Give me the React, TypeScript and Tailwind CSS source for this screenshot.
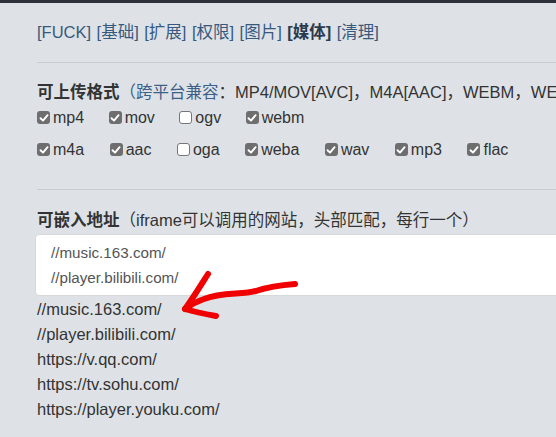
import React from "react";

const FONT = '"Liberation Sans", Arial, "Noto Sans CJK SC", sans-serif';

function Box({ checked }: { checked: boolean }) {
  return checked ? (
    <span className="inline-flex h-[13px] w-[13px] shrink-0 items-center justify-center rounded-[3px] bg-[#6e6e6e]">
      <svg width="10" height="10" viewBox="0 0 10 10">
        <path d="M1.5 5.2 L4 7.6 L8.6 2.2" fill="none" stroke="#fff" strokeWidth="1.9" strokeLinecap="round" strokeLinejoin="round" />
      </svg>
    </span>
  ) : (
    <span className="inline-block h-[13px] w-[13px] shrink-0 rounded-[3px] border border-[#767676] bg-white" />
  );
}

function Item({ label, checked }: { label: string; checked: boolean }) {
  return (
    <span className="flex items-center gap-[3px]">
      <Box checked={checked} />
      <span className="text-[16px]">{label}</span>
    </span>
  );
}

export default function App() {
  const row1: [string, boolean][] = [
    ["mp4", true],
    ["mov", true],
    ["ogv", false],
    ["webm", true],
  ];
  const row2: [string, boolean][] = [
    ["m4a", true],
    ["aac", true],
    ["oga", false],
    ["weba", true],
    ["wav", true],
    ["mp3", true],
    ["flac", true],
  ];
  const nav = ["[FUCK]", "[基础]", "[扩展]", "[权限]", "[图片]"];
  return (
    <div className="relative h-[437px] w-[556px] overflow-hidden bg-[#dee2e6] text-[#333]" style={{ fontFamily: FONT }}>
      <div className="h-[3px] bg-[#2e3238]" />
      <div className="pl-[37px] text-[16.5px]">
        <div className="mt-[17px] flex h-[25px] items-center gap-[5.5px] whitespace-nowrap text-[#36597e]">
          {nav.map((n) => (
            <span key={n}>{n}</span>
          ))}
          <span className="font-bold text-[#2b3b4e]">[媒体]</span>
          <span>[清理]</span>
        </div>
        <div className="mt-[17px] h-px w-[600px] bg-[#c9cdd1]" />
        <div className="mt-[17px] flex h-[25px] items-center whitespace-nowrap">
          <span className="font-bold">可上传格式</span>
          <span className="text-[#3a5f88]">（跨平台兼容</span>
          <span>：MP4/MOV[AVC]，M4A[AAC]，WEBM，WEBA，MP3，FLAC）</span>
        </div>
        <div className="flex h-[25px] items-center gap-x-[24.5px] whitespace-nowrap">
          {row1.map(([l, c]) => (
            <Item key={l} label={l} checked={c} />
          ))}
        </div>
        <div className="mt-[7px] flex h-[25px] items-center gap-x-[25.5px] whitespace-nowrap">
          {row2.map(([l, c]) => (
            <Item key={l} label={l} checked={c} />
          ))}
        </div>
        <div className="mt-[27px] h-px w-[600px] bg-[#c9cdd1]" />
        <div className="mt-[18px] flex h-[25px] items-center whitespace-nowrap">
          <span className="font-bold">可嵌入地址</span>
          <span>（iframe可以调用的网站，头部匹配，每行一个）</span>
        </div>
        <div className="-ml-[2px] mt-[1px] h-[62px] w-[600px] rounded-[4px] border border-[#d6d9dc] bg-white pl-[15px] pt-[5px] text-[15.2px] leading-[25px] text-[#555]">
          <div>//music.163.com/</div>
          <div>//player.bilibili.com/</div>
        </div>
        <div className="mt-[1px] leading-[25px]">
          <div>//music.163.com/</div>
          <div>//player.bilibili.com/</div>
          <div>https://v.qq.com/</div>
          <div>https://tv.sohu.com/</div>
          <div>https://player.youku.com/</div>
        </div>
      </div>
      <svg className="pointer-events-none absolute left-0 top-0" width="556" height="437" viewBox="0 0 556 437">
        <g fill="none" stroke="#f00000" strokeWidth="6" strokeLinecap="round" strokeLinejoin="round">
          <path d="M208 274 C201 285 193 298 185 309 C195 312 205 314 216 316" />
          <path d="M295 284 C282 285 268 287 256 291 C242 295 222 292 204 299 C195 302 189 306 185 309" />
        </g>
      </svg>
    </div>
  );
}
